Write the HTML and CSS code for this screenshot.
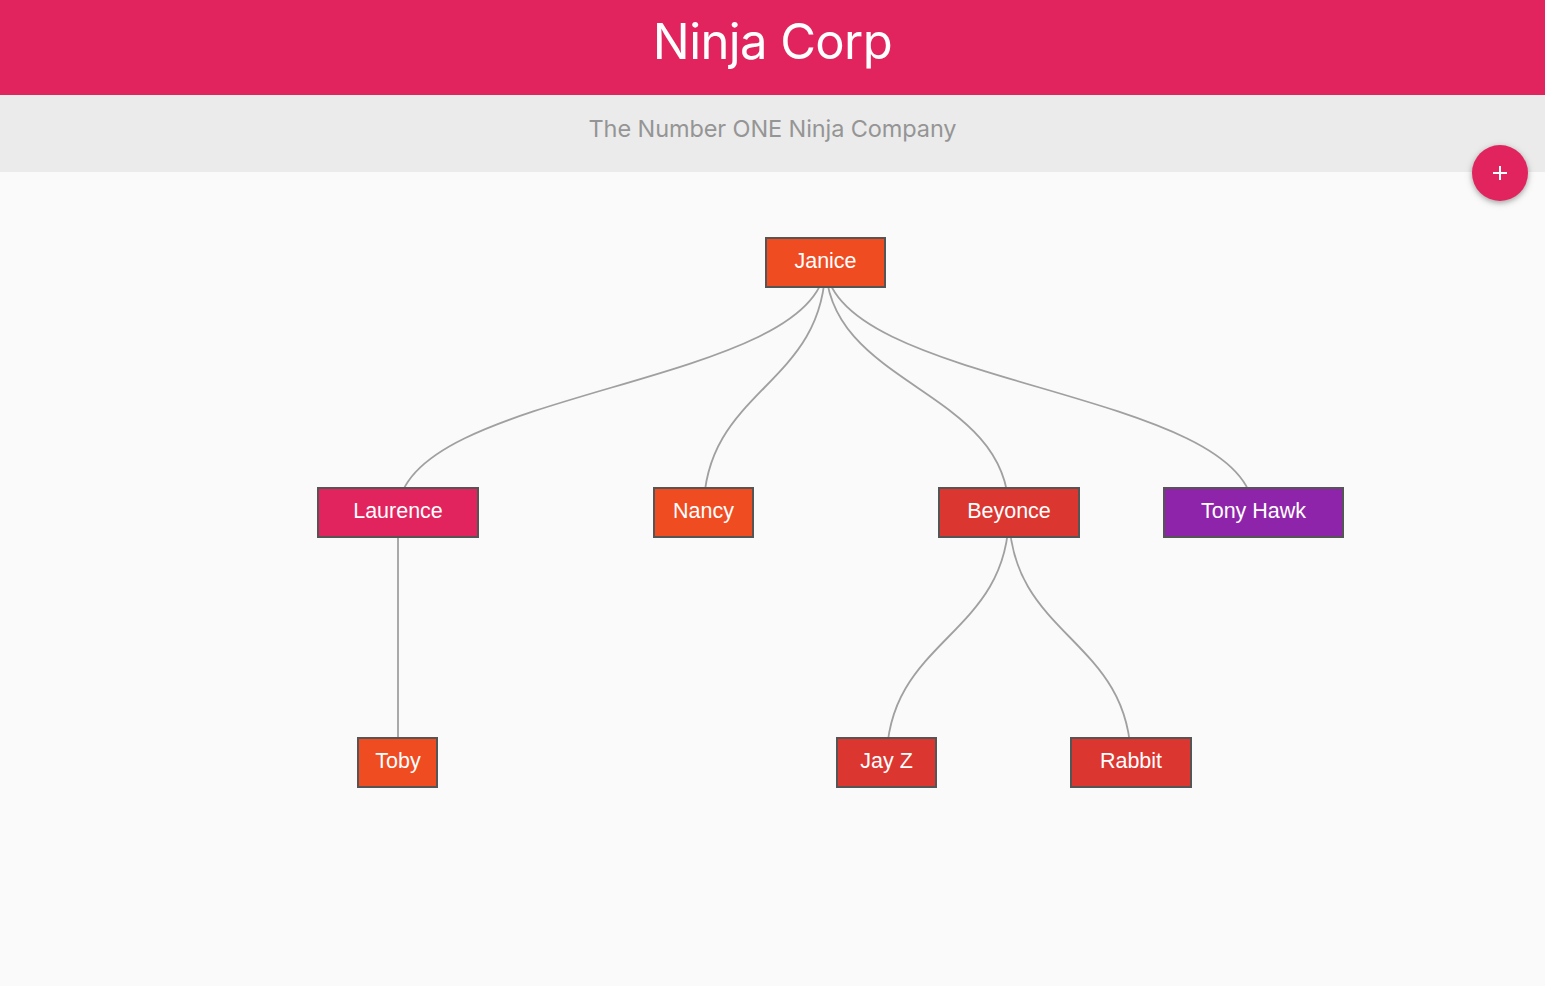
FILE: index.html
```html
<!DOCTYPE html>
<html>
<head>
<meta charset="utf-8">
<title>Ninja Corp</title>
<link rel="stylesheet" href="styles.css">
</head>
<body>
<header class="top-bar">
  <h1 class="title">Ninja Corp</h1>
</header>
<div class="sub-bar">
  <p class="subtitle">The Number ONE Ninja Company</p>
</div>
<main class="canvas">
  <button class="fab" aria-label="Add">
    <svg width="16" height="16" viewBox="0 0 16 16"><path d="M8 1v14M1 8h14" stroke="#fff" stroke-width="2" fill="none"/></svg>
  </button>
  <svg class="tree" width="1545" height="814" viewBox="0 0 1545 814">
    <g transform="translate(0,-172)">
      <g class="links">
        <path d="M825.5,262.5C825.5,387.5 398,387.5 398,512.5"/>
        <path d="M825.5,262.5C825.5,387.5 703.5,387.5 703.5,512.5"/>
        <path d="M825.5,262.5C825.5,387.5 1009,387.5 1009,512.5"/>
        <path d="M825.5,262.5C825.5,387.5 1253.5,387.5 1253.5,512.5"/>
        <path d="M398,512.5C398,637.5 398,637.5 398,762.5"/>
        <path d="M1009,512.5C1009,637.5 886.5,637.5 886.5,762.5"/>
        <path d="M1009,512.5C1009,637.5 1131,637.5 1131,762.5"/>
      </g>
      <g class="nodes">
        <g class="node orange"><rect x="766" y="238" width="119" height="49"/><text x="825.5" y="268">Janice</text></g>
        <g class="node pink"><rect x="318" y="488" width="160" height="49"/><text x="398" y="518">Laurence</text></g>
        <g class="node orange"><rect x="654" y="488" width="99" height="49"/><text x="703.5" y="518">Nancy</text></g>
        <g class="node red"><rect x="939" y="488" width="140" height="49"/><text x="1009" y="518">Beyonce</text></g>
        <g class="node purple"><rect x="1164" y="488" width="179" height="49"/><text x="1253.5" y="518">Tony Hawk</text></g>
        <g class="node orange"><rect x="358" y="738" width="79" height="49"/><text x="398" y="768">Toby</text></g>
        <g class="node red"><rect x="837" y="738" width="99" height="49"/><text x="886.5" y="768">Jay Z</text></g>
        <g class="node red"><rect x="1071" y="738" width="120" height="49"/><text x="1131" y="768">Rabbit</text></g>
      </g>
    </g>
  </svg>
</main>
</body>
</html>
```
FILE: styles.css
```css
html, body {
  margin: 0;
  padding: 0;
}
body {
  background: #fafafa;
  font-family: Inter, "Liberation Sans", Arial, sans-serif;
  width: 1545px;
  height: 986px;
  overflow: hidden;
}
.top-bar {
  height: 95px;
  background: #e2245e;
  display: flex;
  align-items: center;
  justify-content: center;
  box-sizing: border-box;
  padding-bottom: 12px;
}
.title {
  margin: 0;
  color: #fff;
  font-weight: 400;
  font-size: 49px;
  line-height: 1;
  letter-spacing: -0.6px;
}
.sub-bar {
  height: 77px;
  background: #ebebeb;
  display: flex;
  align-items: center;
  justify-content: center;
  box-sizing: border-box;
  padding-bottom: 10px;
}
.subtitle {
  margin: 0;
  color: #959595;
  font-size: 23.5px;
  line-height: 1;
  letter-spacing: -0.1px;
}
.canvas {
  position: relative;
  height: 814px;
}
.tree {
  display: block;
}
.fab {
  position: absolute;
  right: 17px;
  top: -27px;
  width: 56px;
  height: 56px;
  border-radius: 50%;
  border: none;
  background: #e2245e;
  box-shadow: 0 2px 5px rgba(0,0,0,0.26), 0 2px 10px rgba(0,0,0,0.12);
  display: flex;
  align-items: center;
  justify-content: center;
  padding: 0;
  z-index: 2;
}
.links path {
  fill: none;
  stroke: #a0a0a0;
  stroke-width: 1.8;
}
.node rect {
  stroke: #555;
  stroke-width: 2;
}
.node text {
  fill: #fff;
  font-family: "Liberation Sans", Arial, sans-serif;
  font-size: 21.5px;
  text-anchor: middle;
}
.orange rect { fill: #f04c22; }
.pink rect { fill: #e2245e; }
.red rect { fill: #dc3631; }
.purple rect { fill: #8e24aa; }
```
